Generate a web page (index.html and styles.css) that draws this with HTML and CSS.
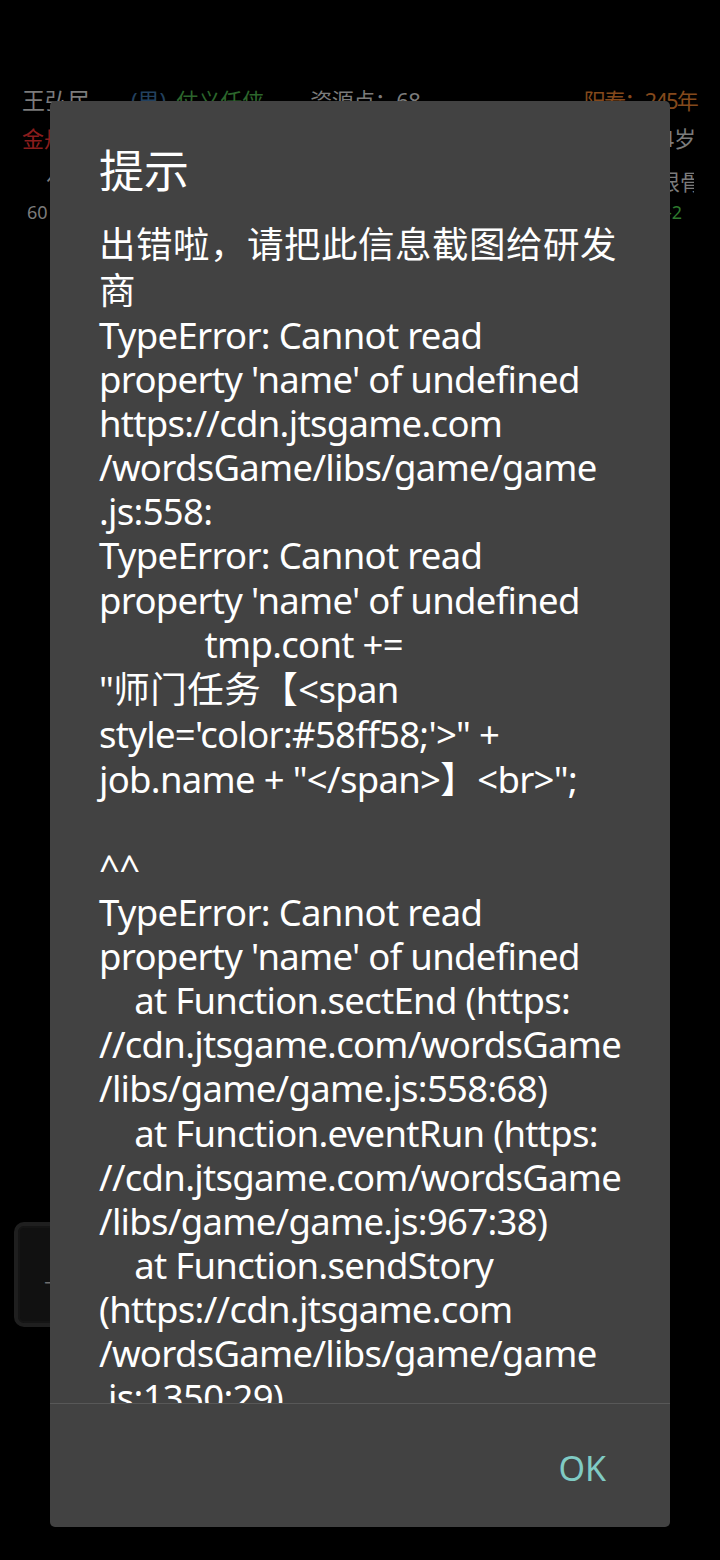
FILE: index.html
```html
<!DOCTYPE html>
<html lang="zh">
<head>
<meta charset="utf-8">
<title>提示</title>
<link rel="stylesheet" href="styles.css">
</head>
<body>
<div class="screen">
  <div class="info">
    <div class="row row1">
      <div class="left">
        <span class="name">王弘民</span>
        <span class="gender">(男)</span>
        <span class="trait">仗义任侠</span>
        <span class="res">资源点：68</span>
      </div>
      <span class="life">阳寿：245年</span>
    </div>
    <div class="row row2">
      <span class="realm">金丹初期</span>
      <span class="age">年龄：104岁</span>
    </div>
    <div class="row row3">
      <span class="attr">化神</span>
      <span class="clip"><span class="bone">根骨</span></span>
    </div>
    <div class="row row4">
      <span class="num">60</span>
      <span class="delta">-2</span>
    </div>
  </div>
  <div class="side-btn"><span>上</span></div>

  <div class="dialog">
    <h2 class="title">提示</h2>
    <div class="msg">
      <div class="c"><span class="h">出错啦，请把此信息截图给研发</span></div>
      <div class="c"><span class="h">商</span></div>
      <div class="l">TypeError: Cannot read</div>
      <div class="l">property 'name' of undefined</div>
      <div class="l">https://cdn.jtsgame.com</div>
      <div class="l">/wordsGame/libs/game/game</div>
      <div class="l">.js:558:</div>
      <div class="l">TypeError: Cannot read</div>
      <div class="l">property 'name' of undefined</div>
      <div class="l">            tmp.cont +=</div>
      <div class="c">"<span class="h">师门任务【</span>&lt;span</div>
      <div class="l">style='color:#58ff58;'&gt;" +</div>
      <div class="c">job.name + "&lt;/span&gt;<span class="h">】</span>&lt;br&gt;";</div>
      <div class="l"> </div>
      <div class="l">^^</div>
      <div class="l">TypeError: Cannot read</div>
      <div class="l">property 'name' of undefined</div>
      <div class="l">    at Function.sectEnd (https:</div>
      <div class="l">//cdn.jtsgame.com/wordsGame</div>
      <div class="l">/libs/game/game.js:558:68)</div>
      <div class="l">    at Function.eventRun (https:</div>
      <div class="l">//cdn.jtsgame.com/wordsGame</div>
      <div class="l">/libs/game/game.js:967:38)</div>
      <div class="l">    at Function.sendStory</div>
      <div class="l">(https://cdn.jtsgame.com</div>
      <div class="l">/wordsGame/libs/game/game</div>
      <div class="l">.js:1350:29)</div>
      <div class="l">    at Function.run</div>
    </div>
    <div class="actions"><span class="ok">OK</span></div>
  </div>
</div>
</body>
</html>
```

FILE: styles.css
```css
html, body {
  margin: 0;
  padding: 0;
  background: #000;
}
body {
  font-family: "Noto Sans", "Noto Sans CJK SC", sans-serif;
}
.screen {
  position: relative;
  width: 720px;
  height: 1560px;
  overflow: hidden;
  background: #000;
}
.info {
  padding-top: 84px;
  color: #7b7b7b;
}
.row {
  display: flex;
  justify-content: space-between;
  align-items: center;
  font-size: 22px;
  line-height: 32px;
  white-space: nowrap;
}
.row1 { padding: 0 23px 0 22px; }
.row1 .left { display: flex; align-items: center; }
.name { font-size: 23px; }
.gender { color: #23415f; margin-left: 40px; }
.trait { color: #2c662c; margin-left: 10px; }
.res { margin-left: 46px; letter-spacing: -0.5px; }
.life { color: #84491c; letter-spacing: -1.8px; }
.row2 { padding: 0 24px 0 22px; margin-top: 6px; }
.realm { color: #8a1d1d; }
.row3 { padding: 0 26px 0 46px; margin-top: 11px; }
.clip { width: 26px; overflow: hidden; display: flex; justify-content: flex-start; }
.bone { margin-left: -10px; }
.row4 { padding: 0 38px 0 27px; margin-top: 2px; font-size: 18px; line-height: 26px; }
.delta { color: #2e7a2e; }

.side-btn {
  margin: 997px 0 0 14px;
  width: 96px;
  height: 105px;
  box-sizing: border-box;
  border: 4px solid #1f1f1f;
  border-radius: 10px;
  background: #111;
  box-shadow: inset 0 0 0 2px #151515;
  display: flex;
  align-items: center;
  padding-left: 26px;
  color: #6f6f6f;
  font-size: 20px;
}

.dialog {
  position: absolute;
  left: 50px;
  top: 101px;
  width: 620px;
  height: 1426px;
  display: flex;
  flex-direction: column;
  background: #424242;
  border-radius: 5px;
  overflow: hidden;
  color: #fff;
}
.title {
  margin: 0;
  padding: 42px 49px 0;
  font-size: 45px;
  line-height: 56px;
  font-weight: 400;
}
.msg {
  flex: 1;
  overflow: hidden;
  margin-top: 22px;
  padding: 0 30px 0 49px;
  font-size: 36.5px;
}
.msg div {
  white-space: pre;
  letter-spacing: -0.7px;
}
.msg .l {
  line-height: 44.1px;
}
.msg .c {
  line-height: 46px;
}
.msg .h {
  letter-spacing: 0.5px;
}
.actions {
  flex: 0 0 123px;
  border-top: 1px solid #585858;
  display: flex;
  align-items: center;
  justify-content: flex-end;
  padding-right: 64px;
}
.ok {
  color: #80cbc4;
  font-size: 34px;
  line-height: 40px;
  margin-top: 4px;
}
```
